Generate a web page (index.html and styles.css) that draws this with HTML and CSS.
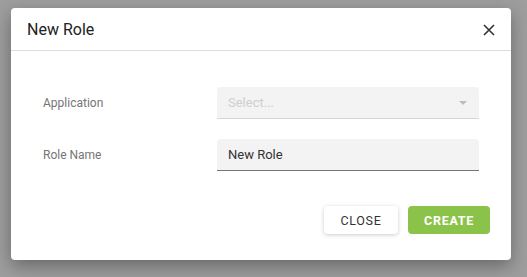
FILE: index.html
```html
<!DOCTYPE html>
<html>
  <head>
    <meta charset="UTF-8" />
    <title>New Role</title>
    <link rel="stylesheet" href="styles.css">
  </head>
  <body>
    <div class="dialog">
      <div class="dialog-header">
        <h2>New Role</h2>
        <span class="close-x">
          <svg width="12" height="12" viewBox="0 0 12 12">
            <path d="M1 1 L11 11 M11 1 L1 11" stroke="#333" stroke-width="1.6" />
          </svg>
        </span>
      </div>
      <div class="dialog-body">
        <div class="form-row">
          <label>Application</label>
          <div class="field select">
            <span class="placeholder">Select...</span>
            <span class="caret"></span>
          </div>
        </div>
        <div class="form-row">
          <label>Role Name</label>
          <div class="field input">New Role</div>
        </div>
      </div>
      <div class="dialog-actions">
        <button class="btn btn-close">CLOSE</button>
        <button class="btn btn-create">CREATE</button>
      </div>
    </div>
  </body>
</html>
```

FILE: styles.css
```css
* {
  box-sizing: border-box;
  margin: 0;
  padding: 0;
}

body {
  font-family: Roboto, "Liberation Sans", sans-serif;
  background-color: #9e9e9e;
  padding: 8px 0 0 11px;
  height: 277px;
  overflow: hidden;
}

.dialog {
  width: 500px;
  height: 252px;
  background-color: #fff;
  border-radius: 4px;
  box-shadow: 0 6px 18px rgba(0, 0, 0, 0.35);
}

.dialog-header {
  height: 43px;
  display: flex;
  align-items: center;
  justify-content: space-between;
  padding: 0 16px;
  border-bottom: 1px solid #dedede;
}

.dialog-header h2 {
  font-size: 16px;
  font-weight: 400;
  color: #222;
}

.close-x {
  display: flex;
  margin-top: 1px;
}

.dialog-body {
  padding: 36px 32px 0;
  display: flex;
  flex-direction: column;
  gap: 20px;
}

.form-row {
  display: flex;
  align-items: center;
}

.form-row label {
  width: 174px;
  font-size: 12px;
  color: #757575;
}

.field {
  flex: 1;
  height: 32px;
  background-color: #f3f3f3;
  border-radius: 4px 4px 0 0;
  padding: 0 11px;
  display: flex;
  align-items: center;
  font-size: 13px;
}

.select {
  border-bottom: 1px solid #d6d6d6;
  justify-content: space-between;
}

.placeholder {
  color: #cfcfcf;
}

.caret {
  width: 0;
  height: 0;
  border-left: 4px solid transparent;
  border-right: 4px solid transparent;
  border-top: 4px solid #bdbdbd;
  margin-right: 1px;
}

.input {
  border-bottom: 1px solid #757575;
  color: #333;
}

.dialog-actions {
  display: flex;
  justify-content: flex-end;
  gap: 10px;
  padding: 35px 21px 0;
}

.btn {
  height: 28px;
  border: none;
  border-radius: 4px;
  font-family: Roboto, "Liberation Sans", sans-serif;
  font-size: 12.5px;
  letter-spacing: 0.7px;
  cursor: pointer;
}

.btn-close {
  width: 74px;
  background-color: #fff;
  color: #333;
  box-shadow: 0 1px 4px rgba(0, 0, 0, 0.2);
}

.btn-create {
  width: 82px;
  background-color: #8bc34a;
  color: #fff;
  font-weight: 700;
}
```
